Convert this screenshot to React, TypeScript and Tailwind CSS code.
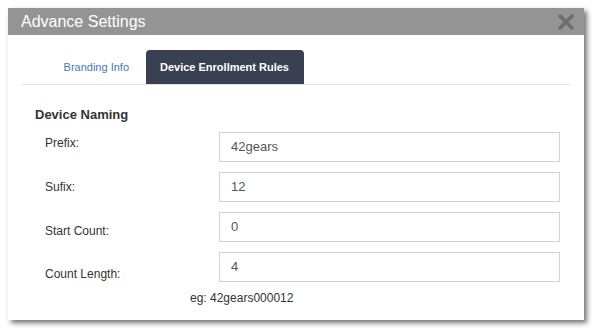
import { X } from 'lucide-react';

const fields = [
    { label: 'Prefix:', value: '42gears' },
    { label: 'Sufix:', value: '12' },
    { label: 'Start Count:', value: '0' },
    { label: 'Count Length:', value: '4' },
];

export default function App() {
    return (
        <div
            className="w-[600px] h-[336px] bg-white pt-2 pl-2"
            style={{ fontFamily: '"Liberation Sans", Arial, sans-serif' }}
        >
            <div className="w-[576px] h-[312px] bg-white shadow-[3px_3px_5px_rgba(0,0,0,0.55)] flex flex-col">
                {/* Header */}
                <div className="h-[27px] bg-[#949494] flex items-center justify-between pl-[13px] pr-[6px]">
                    <span className="text-white text-[16px] leading-none">Advance Settings</span>
                    <X size={24} strokeWidth={3.6} className="text-[#6e6e6e]" />
                </div>

                {/* Tabs */}
                <div className="mx-[13px] mt-[15px] h-[35px] border-b border-[#e2e2e2] flex items-end">
                    <div className="w-[125px] h-[34px] flex items-center justify-end pr-[17px] text-[11px] text-[#4a78b4]">
                        Branding Info
                    </div>
                    <div className="h-[34px] pl-[14px] pr-[15px] bg-[#394051] rounded-t-[4px] flex items-center text-[11px] font-bold text-white">
                        Device Enrollment Rules
                    </div>
                </div>

                {/* Device Naming */}
                <div className="pl-[27px] pt-[23px] text-[13px] font-bold text-[#333] leading-none">Device Naming</div>

                <div className="flex mt-[11px]">
                    <div className="w-[211px] pl-[37px] pt-[5px] flex flex-col text-[12px] leading-none text-[#333]">
                        <div>Prefix:</div>
                        <div className="mt-[32px]">Sufix:</div>
                        <div className="mt-[32px]">Start Count:</div>
                        <div className="mt-[31px]">Count Length:</div>
                    </div>
                    <div className="flex flex-col gap-[10px] w-[341px]">
                        {fields.map((f) => (
                            <div
                                key={f.label}
                                className="h-[30px] border border-[#d2d2d2] flex items-center pl-[11px] text-[13px] text-[#555]"
                            >
                                {f.value}
                            </div>
                        ))}
                    </div>
                </div>

                <div className="pl-[182px] mt-[10px] text-[12px] leading-none text-[#333]">eg: 42gears000012</div>
            </div>
        </div>
    );
}
